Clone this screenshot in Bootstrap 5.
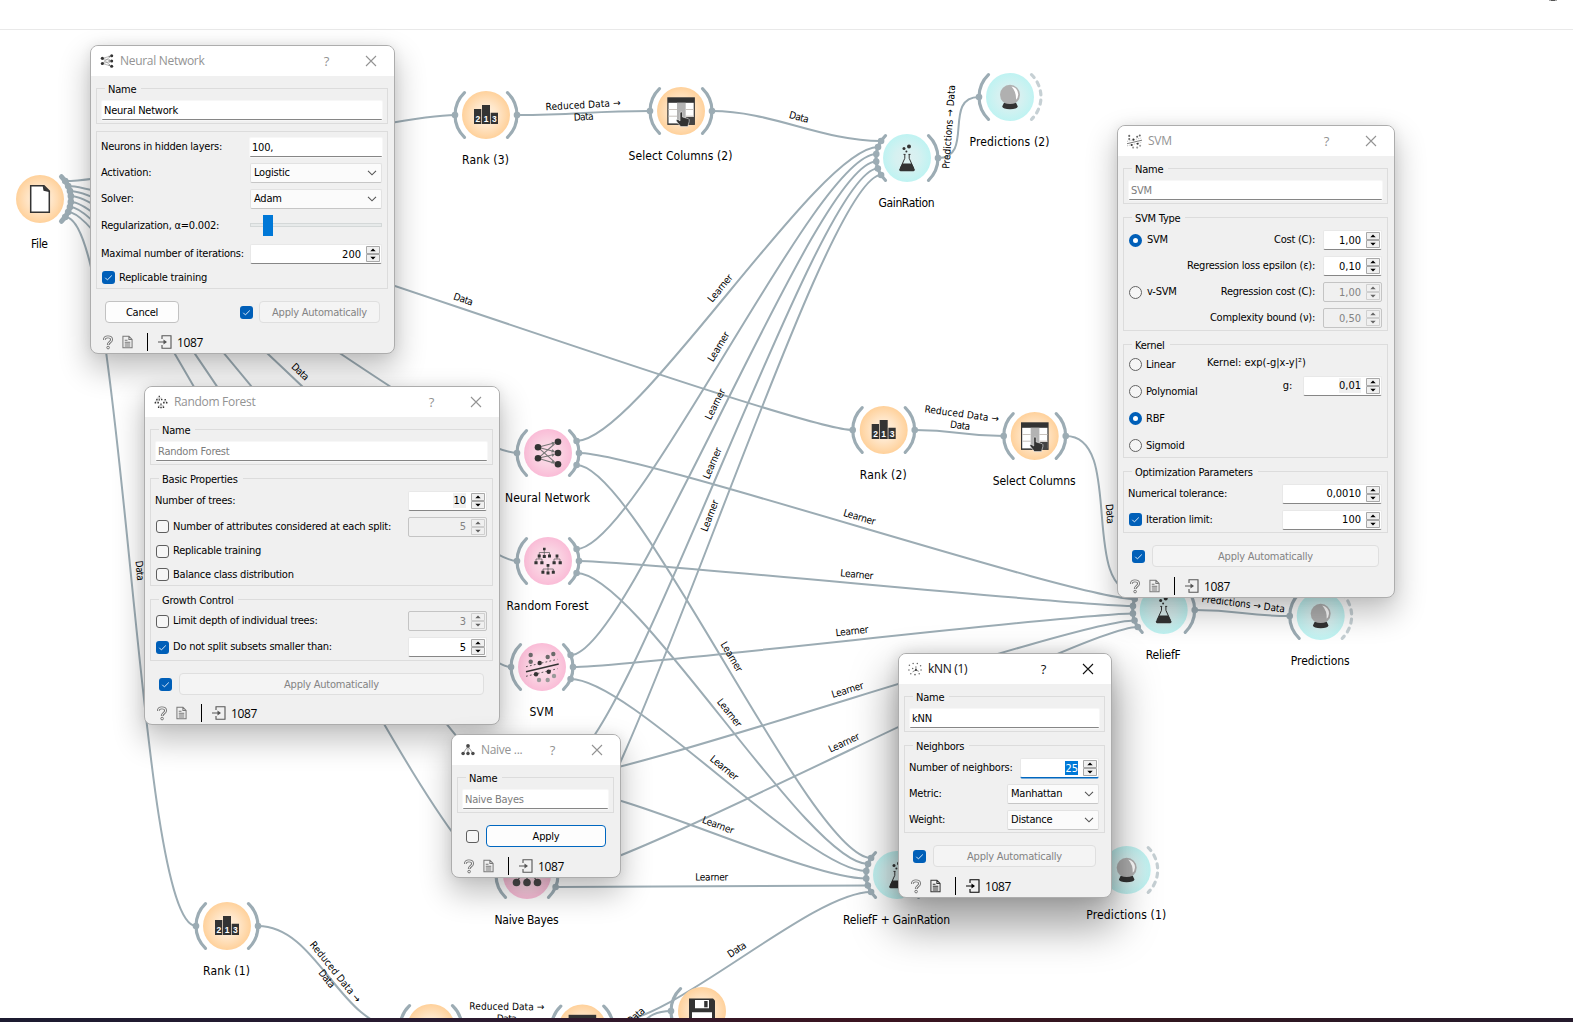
<!DOCTYPE html>
<html lang="en">
<head>
<meta charset="utf-8">
<title>Orange workflow</title>
<link rel="stylesheet" href="https://cdn.jsdelivr.net/npm/bootstrap@5.3.0/dist/css/bootstrap.min.css">
<style>
html,body{height:100%;overflow:hidden}
body{font-family:"DejaVu Sans Condensed","DejaVu Sans",sans-serif;font-stretch:condensed;font-size:11px;line-height:16px;color:#000;background:#fff}
.topstrip{height:30px;border-bottom:1px solid #e9e9e9;flex:none}
.taskline{height:4px;flex:none;background:linear-gradient(90deg,#1c1b30,#2a1a30 30%,#3b1420 55%,#30161f 75%,#241a2c)}
.workflow{position:absolute;left:0;top:0;width:1573px;height:1018px}
.win{position:absolute;border:1px solid #adadad;border-radius:8px;background:#f0f0f0;letter-spacing:-.23px;box-shadow:0 14px 30px 2px rgba(0,0,0,.24),0 0 12px rgba(0,0,0,.07)}
.win-active{box-shadow:0 24px 42px 6px rgba(0,0,0,.36),0 0 16px rgba(0,0,0,.14)}
.win-nn{left:90px;top:45px;width:305px;height:309px}
.win-rf{left:144px;top:386px;width:356px;height:339px}
.win-svm{left:1117px;top:125px;width:278px;height:473px}
.win-nb{left:451px;top:734px;width:170px;height:144px}
.win-knn{left:898px;top:653px;width:214px;height:245px}
.titlebar{height:30px;background:#fff;border-radius:7px 7px 0 0;color:#939393;font:12px/30px "Open Sans","Noto Sans",sans-serif;letter-spacing:-.3px;padding:0 17px 0 9px;flex:none}
.win-active .titlebar{color:#111}
.titlebar .ttl{margin-left:6px}
.titlebar .help{margin-right:36px;font-size:13px}
.body-pad{padding:12px 6px 0 5px;min-height:0}
.grp{border:1px solid #dcdcdc;padding:0 5px}
.grp .cap{align-self:flex-start;background:#f0f0f0;margin:-8px 0 0 3px;padding:0 5px 0 3px;height:16px;line-height:18px;white-space:nowrap}
.grp-name{height:36px}
.gap-a{margin-top:13px}
.gap-b{margin-top:7px}
.form-control.fld{height:19px;min-height:0;padding:0 2px;font-size:11px;line-height:20px;border:0;border-bottom:1px solid #868686;border-radius:1px;background:#fff;color:#000;box-shadow:0 0 0 1px #f7f7f7;white-space:nowrap;overflow:hidden}
.form-control.fld.soft{color:#7c7c7c}
.grp-name .fld{margin-top:4px;flex:none}
.form-select.cmb{height:20px;padding:0 4px 0 3px;font-size:11px;line-height:18px;border:1px solid #e2e2e2;border-bottom-color:#c6c6c6;border-radius:2px;background:#fbfbfb;color:#000}
.spin{height:20px;background:#fff;border:1px solid #e8e8e8;border-bottom:1px solid #868686;border-radius:2px;line-height:18px;padding-right:1px}
.spin .num{margin-right:5px;position:static;padding-top:1px;letter-spacing:0}
.spin .num.hl{background:#f0f0f0;line-height:14px}
.spin.off{background:#f0f0f0;border-color:#c4c4c4;color:#838383}
.spin.focus{border-bottom:1px solid #0067c0;box-shadow:0 1px 0 -.5px #0067c0}
.spin.focus .num{background:#0078d7;color:#fff;line-height:13px}
.row-l{margin-left:-1px;flex:none;white-space:nowrap}
.drop-1{padding-top:2px}
.drop-2{padding-top:4px}
.r21{height:21px}.r23{height:23px}.r24{height:24px}.r25{height:25px}.r26{height:26px}.r27{height:27px}
.w132{width:132px}.w100{width:100px}.w79{width:79px}.w92{width:92px}.w59{width:59px}
.cbx{width:13px;height:13px;flex:none;margin-left:1px;border:1px solid #5e5e5e;border-radius:3px;background:#f6f6f6}
.cbx.on{border:0;background:#005fb8}
.rad{width:13px;height:13px;flex:none;margin-left:1px;border:1px solid #636363;border-radius:50%;background:#f6f6f6}
.rad.on{border:4.3px solid #005fb8;background:#fff}
.btn.pb{height:22px;padding:0;font-size:11px;line-height:22px;border:1px solid #c2c2c2;border-radius:4px;background:#fdfdfd;color:#000;letter-spacing:-.23px}
.btn.pb.dim{background:#f4f4f4;border-color:#dfdfdf;color:#838383}
.btn.pb.def{border-color:#0067c0}
.actions{margin-top:12px;flex:none;height:22px}
.statusline{margin-top:auto;height:22px;flex:none;padding-left:6px;font:12px/23px "Open Sans","Noto Sans",sans-serif;letter-spacing:-.35px}
.statusline .bar{width:1px;height:18px;background:#000}
.slide-box{height:22px}
.slide-groove{left:0;right:0;top:8px;height:4px;border:1px solid #d4d8d8;background:#e7eaea;position:absolute}
.slide-knob{left:13px;top:0;width:10px;height:21px;background:#0078d7;position:absolute}
.nlabel{font-size:12px;text-anchor:middle}
.llabel{font-size:10px;text-anchor:middle}
</style>
<script src="https://cdn.jsdelivr.net/npm/bootstrap@5.3.0/dist/js/bootstrap.bundle.min.js"></script>
</head>
<body class="d-flex flex-column">
<svg width="0" height="0" class="position-absolute">
<defs>
<radialGradient id="go"><stop offset="0" stop-color="#fff2e2"/><stop offset=".45" stop-color="#ffe7cb"/><stop offset="1" stop-color="#ffd19b"/></radialGradient>
<radialGradient id="gp"><stop offset="0" stop-color="#fbdfea"/><stop offset=".5" stop-color="#fad3e2"/><stop offset="1" stop-color="#fabcd7"/></radialGradient>
<radialGradient id="gc"><stop offset="0" stop-color="#dff0f0"/><stop offset=".5" stop-color="#d5f1f1"/><stop offset="1" stop-color="#bff3f2"/></radialGradient>
<g id="i-rank"><path fill="#333" d="M-12-6h7.3V9H-12zM-4-10H4V9h-8zM4.7-2.3H12V9H4.7z"/><g fill="#fff" font-family="Liberation Sans" font-weight="bold" font-size="8.5" text-anchor="middle"><text x="-8.2" y="7">2</text><text x="0" y="7">1</text><text x="8.4" y="7">3</text></g></g>
<g id="i-cols"><path fill="#333" d="M-13.7-13.7h27.6v27.6h-27.6z"/><path fill="#fff" d="M-12.5-8.2h25.2v20.6h-25.2z"/><path fill="#b3b3b3" d="M-4-8.2h8.7v20.6H-4z"/><path fill="#444" d="M5 6h8v7H5z"/><path stroke="#c9c3bd" d="M-12.5-1.5H-4M-12.5 5.2H-4M4.7-1.5h8M4.7 5.2h8" fill="none"/><path fill="#333" stroke="#eee" stroke-width=".6" d="M-1 1.5Q.3.3 1.5 1.5V6L7.3 7.6Q8.7 8.3 8.2 10.5L6.8 15.6H-.3L-4.8 9.8Q-4.6 7.8-2.8 8.7L-1 10z"/></g>
<g id="i-flask"><g fill="#333"><circle cx="-3" cy="-9.5" r="1.5"/><circle cx="2" cy="-11.6" r="2"/><circle cx="-.6" cy="-6.6" r="1"/><path d="M-4.6 5.4H4.6L7.8 11.5Q8 13.2 6.5 13.2H-6.5Q-8 13.2-7.8 11.5z"/></g><path fill="none" stroke="#333" d="M-2.2-3.5V.3L-6.6 10M2.2-3.5V.3L6.6 10M-3.5-3.6h2M1.5-3.6h2"/></g>
<g id="i-ball"><circle cy="-2.3" r="10" fill="#b0b0b0"/><path d="M1.5-10.5Q8-9 8.3-2.5 8 1 6 2.8 6.5-5 1.5-10.5z" fill="#fff"/><path fill="#333" d="M-6 5.7Q0 8.5 6 5.7L7.8 9.5Q7 12.2 0 12.2-7 12.2-7.8 9.5z"/></g>
<g id="i-nn"><path stroke="#777" stroke-width="1.1" fill="none" d="M-10-5.7 6-10M-10-5.7 6-1.5M-10-5.7 6.5 8.8M-10 5.3 6.5-9M-10 5.3 6 1.5M-10 5.3 6 10"/><path fill="#777" d="M7.5-10.5 3.5-11.3 4.5-7.7zM7-1 4.5-4 3.2-.4zM7 1 3.5.5 4.5 4zM7.5 10.4 4.8 7 3 10.3z"/><g fill="#333"><circle cx="-10" cy="-5.7" r="3.3"/><circle cx="-10" cy="5.3" r="3.3"/><circle cx="10" cy="-11.3" r="3.3"/><circle cx="10" r="3.3"/><circle cx="10" cy="11.2" r="3.3"/></g></g>
<g id="i-rf"><path stroke="#555" stroke-width=".7" fill="none" d="M-3.7-12V-5M-8.7-5V-8.5H1.5V-5M-12 1V-2H-6V1M-9-5V-2M6 1V-2H12V1M9-5V-2M0 4V11.5M-5 11V8H5.3V11"/><path fill="#333" d="M-5-13.3h2.6v2.6H-5zM-10.3-6.6h3v3h-3zM-5.2-6h3v3h-3zM0-6.6h3v3H0zM-13.6.2h3.2v3h-3.2zM-7.7.2h3.2v3h-3.2zM7.6-6.4h2.8v2.8H7.6zM4.5.2h3.2v3H4.5zM10.6.2h3.2v3h-3.2zM-1.4 3h2.8v2.8h-2.8zM-6.6 9.8h3v3h-3zM-1.5 10.5h3v3h-3zM3.8 9.8h3v3h-3z"/></g>
<g id="i-svm"><g fill="#6a6a6a"><circle cx="-11.3" cy="-12" r="2.2"/><circle cx="-11.3" cy="-5.3" r="2.2"/><circle cx="5.7" cy="-10" r="2.2"/><circle cx="11.3" cy="-13" r="2.2"/></g><g fill="#333"><circle cx="-2.3" cy="-4" r="2.2"/><circle cx="6.7" cy="4.7" r="2.2"/><circle cx="-6" cy="7.3" r="2.2"/></g><g fill="#999"><circle cx="-3" cy="13" r="2.2"/><circle cx="5.7" cy="13" r="2.2"/><circle cx="12" cy="9" r="2.2"/></g><path stroke="#333" stroke-width="1.4" d="M-16 4.7 16.7-3"/><path stroke="#333" stroke-width=".8" stroke-dasharray="1.8 2.2" d="M-16-.3 15.5-7.7M-16 9.3 15.5 1.7"/></g>
<g id="i-nb"><path stroke="#555" stroke-width="1.2" d="M0-8-10.5 7M0-8V7M0-8 10.5 7"/><g fill="#4a4a4a"><circle cy="-9" r="4"/><circle cx="-10.5" cy="7.5" r="3.8"/><circle cy="7.5" r="3.8"/><circle cx="10.5" cy="7.5" r="3.8"/></g></g>
<g id="i-knn"><g fill="#666"><circle cx="-12" cy="-8" r="1.6"/><circle cx="-4" cy="-12" r="1.6"/><circle cx="5" cy="-12" r="1.6"/><circle cx="12" cy="-7" r="1.6"/><circle cx="-13" cy="2" r="1.6"/><circle cx="-9" cy="10" r="1.6"/><circle cy="12" r="1.8"/><circle cx="9" cy="10" r="1.6"/><circle cx="13" cy="2" r="1.6"/><circle cx="-5" cy="-1" r="1.6"/></g><path stroke="#444" stroke-width="1.4" d="M2 2V-6M2 2-5 6M2 2 8 5"/><circle cx="2" cy="2" r="2.2" fill="#333"/></g>
<g id="i-file"><path fill="#fff" stroke="#333" stroke-width="1.5" d="M-9.3-13.3H4L9.3-8V13.3H-9.3z"/><path fill="#333" d="M2.5-14 10-6.8 3.5-8.2z"/></g>
<g id="i-save"><path fill="#333" d="M-13-12.5H11L13-10.5V13H-13z"/><path fill="#fff" d="M-7-11H7v8.3H-7zM-10 1.2H10V13H-10z"/><path fill="#333" d="M2.2-10h3.4v6.3H2.2z"/></g>
</defs>
<symbol id="s-help" viewBox="0 0 12 16"><path d="M2.2 5.2C2 2.8 3.6 2 5.8 2s4 1.1 4 3c0 2.6-3.6 2.7-3.6 5.6" fill="none" stroke="#6e6e6e" stroke-width="3"/><path d="M2.2 5.2C2 2.8 3.6 2 5.8 2s4 1.1 4 3c0 2.6-3.6 2.7-3.6 5.4" fill="none" stroke="#f0f0f0" stroke-width="1.1"/><circle cx="6.1" cy="13.4" r="1.4" fill="none" stroke="#6e6e6e"/></symbol>
<symbol id="s-doc" viewBox="0 0 12 14"><path d="M1 .8h6.6L11 4.2v9H1z M7.5.8v3.5H11M3 5h3M3 7.3h6M3 9.3h6M3 11.3h6" fill="none" stroke="currentColor" stroke-width="1.1"/></symbol>
<symbol id="s-in" viewBox="0 0 14 14"><path d="M4 4V.7h9v12.6H4V10M0 7h8" fill="none" stroke="currentColor" stroke-width="1.1"/><path d="M5.5 4.6 9 7 5.5 9.4z" fill="currentColor"/></symbol>
<symbol id="s-x" viewBox="0 0 12 12"><path d="M1 1l10 10M11 1 1 11" stroke="currentColor" stroke-width="1.1"/></symbol>
<symbol id="s-chk" viewBox="0 0 13 13"><path d="M3.3 6.8 5.4 8.9 9.8 4.5" fill="none" stroke="#dcebf8" stroke-width="1"/></symbol>
<symbol id="s-dn" viewBox="0 0 10 6"><path d="M1 .8 5 4.8 9 .8" fill="none" stroke="#555" stroke-width="1.1"/></symbol>
<symbol id="s-spin" viewBox="0 0 14 16"><path d="M.5.5h13v7H.5zM.5 8.5h13v7H.5z" fill="#f0f0f0" stroke="#a8a8a8"/><path d="M7 2.6 9.7 5.3H4.3zM7 13.4 9.7 10.7H4.3z" fill="#000"/></symbol>
<symbol id="s-spin0" viewBox="0 0 14 16"><path d="M.5.5h13v7H.5zM.5 8.5h13v7H.5z" fill="#f0f0f0" stroke="#d0d0d0"/><path d="M7 2.6 9.7 5.3H4.3zM7 13.4 9.7 10.7H4.3z" fill="#666"/></symbol>
</svg>

<header class="topstrip"></header>
<main class="flex-grow-1"></main>
<footer class="taskline"></footer>

<svg class="workflow" viewBox="0 0 1573 1018">
  <path d="M1549 0h8M1551 .5h4" stroke="#555" stroke-width="1"/>
  <g id="links" fill="none" stroke="#9cacb4" stroke-width="2"></g>
  <g id="nodes"></g>
  <g id="linklabels"></g>
</svg>

<!-- Neural Network -->
<section class="win win-nn d-flex flex-column">
  <div class="titlebar d-flex align-items-center"><svg width="14" height="14" viewBox="-15 -15 30 30"><use href="#i-nn"/></svg><span class="ttl me-auto">Neural Network</span><span class="help">?</span><svg width="12" height="12"><use href="#s-x"/></svg></div>
  <div class="body-pad d-flex flex-column flex-grow-1">
    <div class="grp grp-name d-flex flex-column"><span class="cap">Name</span><div class="form-control fld">Neural Network</div></div>
    <div class="grp gap-b d-flex flex-column" style="height:158px">
      <div class="row-l r26 d-flex align-items-center justify-content-between drop-2"><span>Neurons in hidden layers:</span><div class="form-control fld w132">100,</div></div>
      <div class="row-l r26 d-flex align-items-center justify-content-between drop-2"><span>Activation:</span><div class="form-select cmb w132 d-flex align-items-center justify-content-between"><span>Logistic</span><svg width="10" height="6"><use href="#s-dn"/></svg></div></div>
      <div class="row-l r26 d-flex align-items-center justify-content-between drop-2"><span>Solver:</span><div class="form-select cmb w132 d-flex align-items-center justify-content-between"><span>Adam</span><svg width="10" height="6"><use href="#s-dn"/></svg></div></div>
      <div class="row-l r27 d-flex align-items-center justify-content-between drop-2"><span>Regularization, α=0.002:</span><div class="slide-box w132 position-relative"><div class="slide-groove"></div><div class="slide-knob"></div></div></div>
      <div class="row-l r26 d-flex align-items-center justify-content-between drop-2 mt-auto"><span>Maximal number of iterations:</span><div class="spin w132 d-flex align-items-center justify-content-end"><span class="num">200</span><svg width="14" height="16"><use href="#s-spin"/></svg></div></div>
      <div class="row-l r23 d-flex align-items-center gap-1 drop-1"><svg class="cbx on"><use href="#s-chk"/></svg><span>Replicable training</span></div>
    </div>
    <div class="actions d-flex align-items-start px-2"><div class="btn pb" style="width:74px;margin-left:1px">Cancel</div><svg class="cbx on align-self-center" style="margin:0 6px 0 auto"><use href="#s-chk"/></svg><div class="btn pb dim" style="width:121px">Apply Automatically</div></div>
    <div class="statusline d-flex align-items-center"><svg width="12" height="15"><use href="#s-help"/></svg><svg width="11" height="14" class="ms-2" style="color:#777;margin-right:14px"><use href="#s-doc"/></svg><i class="bar"></i><svg width="14" height="14" style="margin:0 5px 0 10px;color:#555"><use href="#s-in"/></svg><span>1087</span></div>
  </div>
</section>

<!-- Random Forest -->
<section class="win win-rf d-flex flex-column">
  <div class="titlebar d-flex align-items-center"><svg width="14" height="14" viewBox="-15 -15 30 30"><use href="#i-rf"/></svg><span class="ttl me-auto">Random Forest</span><span class="help">?</span><svg width="12" height="12"><use href="#s-x"/></svg></div>
  <div class="body-pad d-flex flex-column flex-grow-1">
    <div class="grp grp-name d-flex flex-column"><span class="cap">Name</span><div class="form-control fld soft">Random Forest</div></div>
    <div class="grp gap-a d-flex flex-column" style="height:108px"><span class="cap">Basic Properties</span>
      <div class="row-l r27 d-flex align-items-center justify-content-between"><span>Number of trees:</span><div class="spin w79 d-flex align-items-center justify-content-end"><span class="num hl">10</span><svg width="14" height="16"><use href="#s-spin"/></svg></div></div>
      <div class="row-l r25 d-flex align-items-center gap-1"><i class="cbx"></i><span class="me-auto">Number of attributes considered at each split:</span><div class="spin off w79 d-flex align-items-center justify-content-end"><span class="num">5</span><svg width="14" height="16"><use href="#s-spin0"/></svg></div></div>
      <div class="row-l r24 d-flex align-items-center gap-1"><i class="cbx"></i><span>Replicable training</span></div>
      <div class="row-l r23 d-flex align-items-center gap-1"><i class="cbx"></i><span>Balance class distribution</span></div>
    </div>
    <div class="grp gap-a d-flex flex-column" style="height:62px"><span class="cap">Growth Control</span>
      <div class="row-l r26 d-flex align-items-center gap-1"><i class="cbx"></i><span class="me-auto">Limit depth of individual trees:</span><div class="spin off w79 d-flex align-items-center justify-content-end"><span class="num">3</span><svg width="14" height="16"><use href="#s-spin0"/></svg></div></div>
      <div class="row-l r26 d-flex align-items-center gap-1"><svg class="cbx on"><use href="#s-chk"/></svg><span class="me-auto">Do not split subsets smaller than:</span><div class="spin w79 d-flex align-items-center justify-content-end"><span class="num">5</span><svg width="14" height="16"><use href="#s-spin"/></svg></div></div>
    </div>
    <div class="actions d-flex align-items-start ps-2 pe-2"><svg class="cbx on align-self-center" style="margin-right:7px"><use href="#s-chk"/></svg><div class="btn pb dim flex-grow-1" style="margin-right:1px">Apply Automatically</div></div>
    <div class="statusline d-flex align-items-center"><svg width="12" height="15"><use href="#s-help"/></svg><svg width="11" height="14" class="ms-2" style="color:#777;margin-right:14px"><use href="#s-doc"/></svg><i class="bar"></i><svg width="14" height="14" style="margin:0 5px 0 10px;color:#555"><use href="#s-in"/></svg><span>1087</span></div>
  </div>
</section>

<!-- SVM -->
<section class="win win-svm d-flex flex-column">
  <div class="titlebar d-flex align-items-center"><svg width="15" height="15" viewBox="-16 -16 32 32"><use href="#i-svm"/></svg><span class="ttl me-auto">SVM</span><span class="help">?</span><svg width="12" height="12"><use href="#s-x"/></svg></div>
  <div class="body-pad d-flex flex-column flex-grow-1">
    <div class="grp grp-name d-flex flex-column"><span class="cap">Name</span><div class="form-control fld soft">SVM</div></div>
    <div class="grp gap-a d-flex flex-column" style="height:114px"><span class="cap">SVM Type</span>
      <div class="row-l r26 d-flex align-items-center gap-1 drop-1"><i class="rad on"></i><span class="me-auto" style="padding-left:1px">SVM</span><span class="me-1">Cost (C):</span><div class="spin w59 d-flex align-items-center justify-content-end"><span class="num">1,00</span><svg width="14" height="16"><use href="#s-spin"/></svg></div></div>
      <div class="row-l r26 d-flex align-items-center justify-content-end gap-1 drop-1"><span class="me-1">Regression loss epsilon (ε):</span><div class="spin w59 d-flex align-items-center justify-content-end"><span class="num">0,10</span><svg width="14" height="16"><use href="#s-spin"/></svg></div></div>
      <div class="row-l r26 d-flex align-items-center gap-1 drop-1"><i class="rad"></i><span class="me-auto" style="padding-left:1px">v-SVM</span><span class="me-1">Regression cost (C):</span><div class="spin off w59 d-flex align-items-center justify-content-end"><span class="num">1,00</span><svg width="14" height="16"><use href="#s-spin0"/></svg></div></div>
      <div class="row-l r26 d-flex align-items-center justify-content-end gap-1 drop-1"><span class="me-1">Complexity bound (ν):</span><div class="spin off w59 d-flex align-items-center justify-content-end"><span class="num">0,50</span><svg width="14" height="16"><use href="#s-spin0"/></svg></div></div>
    </div>
    <div class="grp gap-a d-flex flex-column" style="height:114px"><span class="cap">Kernel</span>
      <div class="d-flex" style="margin-top:-2px">
        <div class="row-l" style="width:79px">
          <div class="r27 d-flex align-items-center gap-1"><i class="rad"></i><span>Linear</span></div>
          <div class="r27 d-flex align-items-center gap-1"><i class="rad"></i><span>Polynomial</span></div>
          <div class="r27 d-flex align-items-center gap-1"><i class="rad on"></i><span>RBF</span></div>
          <div class="r27 d-flex align-items-center gap-1"><i class="rad"></i><span>Sigmoid</span></div>
        </div>
        <div class="flex-grow-1">
          <div class="r24 d-flex align-items-center" style="letter-spacing:0">Kernel: exp(-g|x-y|²)</div>
          <div class="r21 d-flex align-items-center justify-content-end"><span style="margin-right:11px">g:</span><div class="spin w79 d-flex align-items-center justify-content-end"><span class="num hl">0,01</span><svg width="14" height="16"><use href="#s-spin"/></svg></div></div>
        </div>
      </div>
    </div>
    <div class="grp gap-a d-flex flex-column" style="height:62px"><span class="cap">Optimization Parameters</span>
      <div class="row-l r27 d-flex align-items-center justify-content-between"><span>Numerical tolerance:</span><div class="spin w100 d-flex align-items-center justify-content-end"><span class="num">0,0010</span><svg width="14" height="16"><use href="#s-spin"/></svg></div></div>
      <div class="row-l r25 d-flex align-items-center gap-1"><svg class="cbx on"><use href="#s-chk"/></svg><span class="me-auto">Iteration limit:</span><div class="spin w100 d-flex align-items-center justify-content-end"><span class="num">100</span><svg width="14" height="16"><use href="#s-spin"/></svg></div></div>
    </div>
    <div class="actions d-flex align-items-start px-2"><svg class="cbx on align-self-center" style="margin-right:7px"><use href="#s-chk"/></svg><div class="btn pb dim flex-grow-1" style="margin-right:1px">Apply Automatically</div></div>
    <div class="statusline d-flex align-items-center"><svg width="12" height="15"><use href="#s-help"/></svg><svg width="11" height="14" class="ms-2" style="color:#777;margin-right:14px"><use href="#s-doc"/></svg><i class="bar"></i><svg width="14" height="14" style="margin:0 5px 0 10px;color:#555"><use href="#s-in"/></svg><span>1087</span></div>
  </div>
</section>

<!-- Naive Bayes -->
<section class="win win-nb d-flex flex-column">
  <div class="titlebar d-flex align-items-center"><svg width="14" height="14" viewBox="-15 -15 30 30"><use href="#i-nb"/></svg><span class="ttl me-auto">Naive ...</span><span class="help">?</span><svg width="12" height="12"><use href="#s-x"/></svg></div>
  <div class="body-pad d-flex flex-column flex-grow-1">
    <div class="grp grp-name d-flex flex-column"><span class="cap">Name</span><div class="form-control fld soft">Naive Bayes</div></div>
    <div class="actions d-flex align-items-start px-2"><i class="cbx align-self-center" style="margin-right:7px"></i><div class="btn pb def flex-grow-1">Apply</div></div>
    <div class="statusline d-flex align-items-center"><svg width="12" height="15"><use href="#s-help"/></svg><svg width="11" height="14" class="ms-2" style="color:#777;margin-right:14px"><use href="#s-doc"/></svg><i class="bar"></i><svg width="14" height="14" style="margin:0 5px 0 10px;color:#555"><use href="#s-in"/></svg><span>1087</span></div>
  </div>
</section>

<!-- kNN -->
<section class="win win-active win-knn d-flex flex-column">
  <div class="titlebar d-flex align-items-center"><svg width="14" height="14" viewBox="-15 -15 30 30"><use href="#i-knn"/></svg><span class="ttl me-auto">kNN (1)</span><span class="help">?</span><svg width="12" height="12"><use href="#s-x"/></svg></div>
  <div class="body-pad d-flex flex-column flex-grow-1">
    <div class="grp grp-name d-flex flex-column"><span class="cap">Name</span><div class="form-control fld">kNN</div></div>
    <div class="grp gap-a d-flex flex-column" style="height:88px"><span class="cap">Neighbors</span>
      <div class="row-l r26 d-flex align-items-center justify-content-between drop-1"><span>Number of neighbors:</span><div class="spin focus w79 d-flex align-items-center justify-content-end"><span class="num">25</span><svg width="14" height="16"><use href="#s-spin"/></svg></div></div>
      <div class="row-l r26 d-flex align-items-center justify-content-between drop-1"><span>Metric:</span><div class="form-select cmb w92 d-flex align-items-center justify-content-between"><span>Manhattan</span><svg width="10" height="6"><use href="#s-dn"/></svg></div></div>
      <div class="row-l r26 d-flex align-items-center justify-content-between drop-1"><span>Weight:</span><div class="form-select cmb w92 d-flex align-items-center justify-content-between"><span>Distance</span><svg width="10" height="6"><use href="#s-dn"/></svg></div></div>
    </div>
    <div class="actions d-flex align-items-start px-2"><svg class="cbx on align-self-center" style="margin-right:7px"><use href="#s-chk"/></svg><div class="btn pb dim flex-grow-1" style="margin-right:1px">Apply Automatically</div></div>
    <div class="statusline d-flex align-items-center"><svg width="12" height="15"><use href="#s-help"/></svg><svg width="11" height="14" class="ms-2" style="color:#333;margin-right:14px"><use href="#s-doc"/></svg><i class="bar"></i><svg width="14" height="14" style="margin:0 5px 0 10px;color:#000"><use href="#s-in"/></svg><span>1087</span></div>
  </div>
</section>

<script>
const NS='http://www.w3.org/2000/svg', R=31;
const el=(p,n,a,t)=>{const e=document.createElementNS(NS,n);for(const k in a)e.setAttribute(k,a[k]);if(t)e.textContent=t;p.appendChild(e);return e};
// id: x, y, fill, icon, label, label width, inputs?, outputs? (2 = nothing connected)
const N={
 file:[40,199,'go','file','File',17,0,1], rank3:[486,115,'go','rank','Rank (3)',47,1,1], sc2:[681,111,'go','cols','Select Columns (2)',104,1,1],
 gr:[907,158,'gc','flask','GainRation',56,1,1], p2:[1010,97,'gc','ball','Predictions (2)',80,1,2],
 rank2:[883.7,430,'go','rank','Rank (2)',47,1,1], sc:[1034.7,436,'go','cols','Select Columns',83,1,1],
 nn:[548,453,'gp','nn','Neural Network',85,1,1], rf:[548,561,'gp','rf','Random Forest',82,1,1], svm:[542,667,'gp','svm','SVM',24,1,1],
 knn:[535,777,'gp','knn','',0,1,1], nb:[527,875,'gp','nb','Naive Bayes',64,1,1],
 rel:[1163.7,610,'gc','flask','ReliefF',35,1,1], p:[1320.7,616,'gc','ball','Predictions',59,1,2],
 rg:[897,875,'gc','flask','ReliefF + GainRation',107,1,1], p1:[1126.7,870,'gc','ball','Predictions (1)',80,1,2],
 rank1:[227,926,'go','rank','Rank (1)',47,1,1], b1:[431,1028,'go','rank','',0,1,1], b2:[582.3,1028.5,'go','cols','',0,1,1], save:[702,1011,'go','save','',0,1,0]};
// from, output offset y, to, input offset y, text, distances of the text lines from the curve
const L=[
 ['file',-18,'rank3',0,'Data'],['file',-13,'rank2',0,'Data'],['file',-8,'nn',0,'Data'],['file',-3,'rf',0,'Data'],['file',3,'svm',0,'Data'],['file',8,'knn',0,'Data'],['file',13,'nb',0,'Data'],['file',18,'rank1',0,'Data'],
 ['rank3',0,'sc2',0,'RD',8,-4],['sc2',0,'gr',-17,'Data'],['gr',0,'p2',0,'Predictions → Data',9.5],
 ['rank2',0,'sc',0,'RD',19,7.5],['sc',0,'rel',-17,'Data',8],['rel',0,'p',0,'Predictions → Data'],['rg',0,'p1',0,'Predictions → Data'],
 ['rank1',0,'b1',0,'RD',8,-3],['b1',0,'b2',0,'RD',21.5,9.5],['b2',-6,'rg',17,'Data'],['b2',6,'save',0,'Data']];
[['nn',-11,-17],['rf',-4,-11],['svm',3.5,-4],['knn',10.5,3.5],['nb',17,10.5]].forEach(([n,a,b])=>{
 L.push([n,-12,'gr',a,'Learner'],[n,0,'rel',a,'Learner'],[n,12,'rg',b,'Learner'])});
const W={'Data':20,'Learner':33,'Predictions → Data':84,'Reduced Data →':75};
const gl=document.getElementById('links'),gn=document.getElementById('nodes'),gt=document.getElementById('linklabels');
const put=(x,y,a,t)=>el(gt,'text',{class:'llabel',transform:`translate(${x} ${y}) rotate(${a})`,y:3.2,textLength:W[t]},t);
for(const [s,so,d,di,t,d1=9,d2] of L){
 const A=N[s],B=N[d],x0=A[0]+Math.sqrt(R*R-so*so),y0=A[1]+so,x3=B[0]-Math.sqrt(R*R-di*di),y3=B[1]+di;
 const c=Math.min(Math.hypot(x3-x0,y3-y0)/2,60),x1=x0+c,x2=x3-c;
 el(gl,'path',{d:`M${x0} ${y0}C${x1} ${y0} ${x2} ${y3} ${x3} ${y3}`});
 for(const [x,y] of [[x0,y0],[x3,y3]])el(gn,'circle',{cx:x,cy:y,r:3.3,fill:'#9cacb4'});
 const mx=(x0+x3)/8+(x1+x2)*3/8,my=(y0+y3)/2,a=Math.atan2(2*(y3-y0),x3-x0+x2-x1),g=a*180/Math.PI;
 const at=(k,w)=>put(mx+Math.sin(a)*k,my-Math.cos(a)*k,g,w);
 if(t==='RD'){at(d1,'Reduced Data →');at(d2,'Data')}else at(d1,t);
}
for(const k in N){const [x,y,f,i,t,w,inn,out]=N[k],g=el(gn,'g',{transform:`translate(${x} ${y})`});
 el(g,'circle',{r:24,fill:`url(#${f})`});el(g,'use',{href:'#i-'+i});
 const arc={fill:'none',stroke:'#9cacb4','stroke-width':3.2,'stroke-linecap':'round'};
 if(inn)el(g,'path',{...arc,d:'M-21.5-22.3A31 31 0 0 0-21.5 22.3'});
 if(out)el(g,'path',{...arc,d:'M21.5-22.3A31 31 0 0 1 21.5 22.3',...(out==2?{stroke:'#c6d0d4','stroke-dasharray':'4 5.3'}:k==='file'?{'stroke-width':5}:{})});
 if(t)el(g,'text',{class:'nlabel',x:-.5,y:49,textLength:w},t);
}
</script>
</body>
</html>
